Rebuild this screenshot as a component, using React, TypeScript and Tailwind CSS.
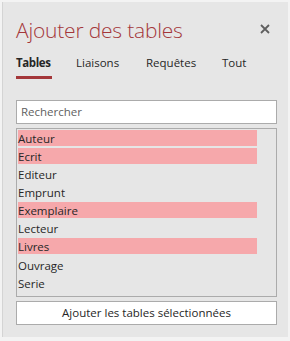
const tables = [
  { name: "Auteur", selected: true },
  { name: "Ecrit", selected: true },
  { name: "Editeur", selected: false },
  { name: "Emprunt", selected: false },
  { name: "Exemplaire", selected: true },
  { name: "Lecteur", selected: false },
  { name: "Livres", selected: true },
  { name: "Ouvrage", selected: false, gap: true },
  { name: "Serie", selected: false },
];

const tabs = ["Tables", "Liaisons", "Requêtes", "Tout"];

export default function App() {
  return (
    <div
      className="w-[290px] h-[341px] bg-[#f3f3f3] pt-[2px] pl-[2px] pr-[2px] pb-[4px]"
      style={{ fontFamily: '"Open Sans", "Liberation Sans", sans-serif' }}
    >
      <div className="h-full bg-[#e6e6e6] border-l border-[#d4d4d4] pl-[13px] pr-[11px]">
        <header className="flex items-start justify-between pt-[15px] h-[48px]">
          <h1 className="text-[21px] font-light leading-[26px] text-[#a4373a] tracking-[-0.2px]">
            Ajouter des tables
          </h1>
          <svg width="10" height="10" viewBox="0 0 10 10" className="mt-[7px] mr-[7px]">
            <path d="M1 1 L9 9 M9 1 L1 9" stroke="#5f5f5f" strokeWidth="1.8" />
          </svg>
        </header>

        <nav className="flex text-[11.5px] text-[#262626] h-[32px] pt-[2px]">
          {tabs.map((t, i) => (
            <div
              key={t}
              className={
                i === 0
                  ? "w-[60px] flex flex-col"
                  : i === 1
                  ? "w-[70px]"
                  : i === 2
                  ? "w-[76px]"
                  : ""
              }
            >
              <span className={i === 0 ? "font-bold tracking-[-0.4px] leading-[22px]" : "leading-[22px]"}>{t}</span>
              {i === 0 && <div className="w-[36px] h-[3px] bg-[#a4373a] mt-[2px]" />}
            </div>
          ))}
        </nav>

        <div className="mt-[18px] h-[24px] bg-white border border-[#ababab] flex items-center px-[4px] text-[11.5px] text-[#5f5f5f]">
          Rechercher
        </div>

        <ul className="mt-[4px] h-[169px] border border-[#ababab] pt-[1px] px-[1px] text-[11.5px] text-[#262626]">
          {tables.map((t) => (
            <li
              key={t.name}
              className={`w-[239px] h-[16px] leading-[17px] mb-[2px] ${t.gap ? "mt-[3px]" : ""} ${
                t.selected ? "bg-[#f6a8ab]" : ""
              }`}
            >
              {t.name}
            </li>
          ))}
        </ul>

        <button className="mt-[4px] w-full h-[24px] bg-white border border-[#ababab] text-[11.5px] text-[#262626] flex items-center justify-center">
          Ajouter les tables sélectionnées
        </button>
      </div>
    </div>
  );
}
